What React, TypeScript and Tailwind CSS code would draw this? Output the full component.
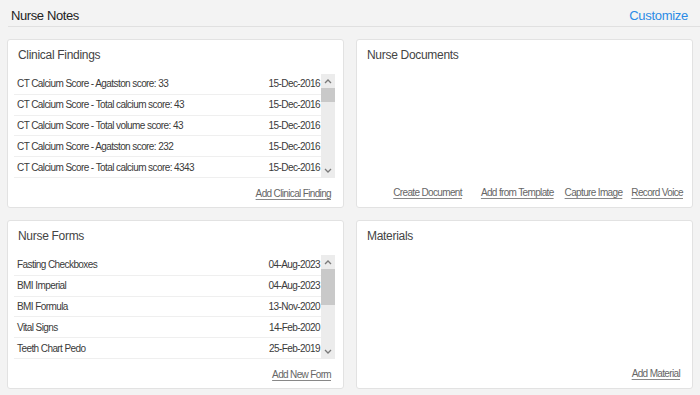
import React from "react";

type Row = { label: string; date: string };

const FINDINGS: Row[] = [
  { label: "CT Calcium Score - Agatston score: 33", date: "15-Dec-2016" },
  { label: "CT Calcium Score - Total calcium score: 43", date: "15-Dec-2016" },
  { label: "CT Calcium Score - Total volume score: 43", date: "15-Dec-2016" },
  { label: "CT Calcium Score - Agatston score: 232", date: "15-Dec-2016" },
  { label: "CT Calcium Score - Total calcium score: 4343", date: "15-Dec-2016" },
];

const FORMS: Row[] = [
  { label: "Fasting Checkboxes", date: "04-Aug-2023" },
  { label: "BMI Imperial", date: "04-Aug-2023" },
  { label: "BMI Formula", date: "13-Nov-2020" },
  { label: "Vital Signs", date: "14-Feb-2020" },
  { label: "Teeth Chart Pedo", date: "25-Feb-2019" },
];

function Chevron({ up }: { up?: boolean }) {
  return (
    <svg width="8" height="5" viewBox="0 0 8 5" className="text-[#7a7a7a]">
      <path
        d={up ? "M1 4 L4 1 L7 4" : "M1 1 L4 4 L7 1"}
        fill="none"
        stroke="currentColor"
        strokeWidth="1.3"
      />
    </svg>
  );
}

function ListBox({ rows, thumbTop, thumbHeight }: { rows: Row[]; thumbTop: number; thumbHeight: number }) {
  return (
    <div className="mt-[11px] ml-[6px] mr-[8px] flex h-[104px]">
      <div className="flex-1">
        {rows.map((r) => (
          <div
            key={r.label}
            className="flex h-[20.8px] items-center justify-between border-b border-[#efefef] pl-[3px] pr-[1px] text-[10px] tracking-[-0.58px] text-[#3a3a3a]"
          >
            <span>{r.label}</span>
            <span>{r.date}</span>
          </div>
        ))}
      </div>
      <div className="relative flex w-[14px] flex-col items-center justify-between bg-[#ececec] py-[5px]">
        <Chevron up />
        <Chevron />
        <div
          className="absolute left-0 w-[14px] bg-[#c9c9c9]"
          style={{ top: thumbTop, height: thumbHeight }}
        />
      </div>
    </div>
  );
}

function Link({ children, className = "" }: { children: React.ReactNode; className?: string }) {
  return (
    <a className={`text-[10px] tracking-[-0.65px] text-[#666] underline decoration-[#888] underline-offset-2 ${className}`}>
      {children}
    </a>
  );
}

function Card({ title, children }: { title: string; children?: React.ReactNode }) {
  return (
    <div className="flex h-[169px] flex-col rounded-[3px] border border-[#e2e2e2] bg-white pt-[7px]">
      <div className="h-[16px] pl-[10px] text-[12px] leading-[16px] tracking-[-0.3px] text-[#444]">{title}</div>
      {children}
    </div>
  );
}

export default function App() {
  return (
    <div className="h-[395px] w-[700px] bg-[#f3f3f3]" style={{ fontFamily: '"Liberation Sans", Arial, sans-serif' }}>
      {/* Header */}
      <div className="ml-2 flex h-[27px] items-start justify-between border-b border-[#e0e0e0] pl-[3px] pr-3 pt-[8px] leading-[16px]">
        <span className="text-[13px] tracking-[-0.4px] text-[#222]">Nurse Notes</span>
        <span className="text-[13px] tracking-[-0.3px] text-[#2b8be6]">Customize</span>
      </div>

      <div className="grid grid-cols-2 gap-3 px-[7px] pt-3">
        <Card title="Clinical Findings">
          <ListBox rows={FINDINGS} thumbTop={14} thumbHeight={14} />
          <div className="mt-[8px] flex justify-end pr-[12px]">
            <Link>Add Clinical Finding</Link>
          </div>
        </Card>

        <Card title="Nurse Documents">
          <div className="mt-auto flex justify-end pb-[7px] pr-[9px]">
            <Link>Create Document</Link>
            <Link className="ml-[19px]">Add from Template</Link>
            <Link className="ml-[11px]">Capture Image</Link>
            <Link className="ml-[9px]">Record Voice</Link>
          </div>
        </Card>

        <Card title="Nurse Forms">
          <ListBox rows={FORMS} thumbTop={14} thumbHeight={36} />
          <div className="mt-[8px] flex justify-end pr-[12px]">
            <Link>Add New Form</Link>
          </div>
        </Card>

        <Card title="Materials">
          <div className="mt-auto flex justify-end pb-[7px] pr-[12px]">
            <Link>Add Material</Link>
          </div>
        </Card>
      </div>
    </div>
  );
}
